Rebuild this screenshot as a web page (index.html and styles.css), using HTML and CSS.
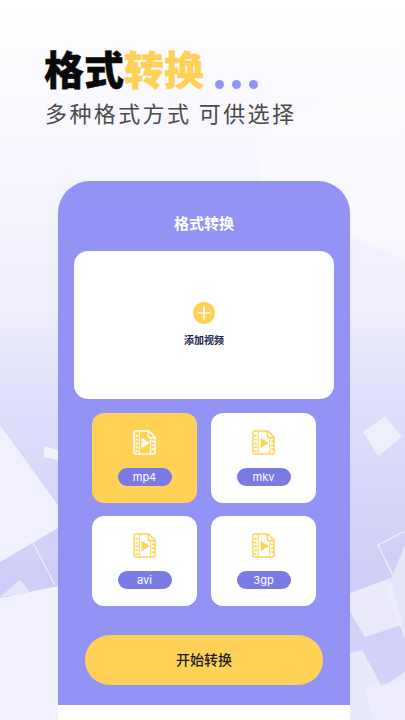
FILE: index.html
```html
<!DOCTYPE html>
<html lang="zh-CN">
<head>
<meta charset="utf-8">
<title>格式转换</title>
<link rel="stylesheet" href="styles.css">
</head>
<body>
<svg class="backdrop" viewBox="0 0 405 720" preserveAspectRatio="none" aria-hidden="true">
  <defs>
    <linearGradient id="bg" x1="0" y1="0" x2="0" y2="1">
      <stop offset="0" stop-color="#ffffff"/>
      <stop offset="0.16" stop-color="#f8f8fe"/>
      <stop offset="0.42" stop-color="#efeffd"/>
      <stop offset="0.56" stop-color="#dfdffb"/>
      <stop offset="0.8" stop-color="#cdcdf8"/>
      <stop offset="1" stop-color="#d4d4f9"/>
    </linearGradient>
  </defs>
  <rect width="405" height="720" fill="url(#bg)"/>
  <path d="M405 82 L330 100 Q260 125 255 145 Q258 175 270 200 L405 260Z" fill="#fff" opacity=".4"/>
  <path d="M0 425 L58 505 L58 528 L0 562Z" fill="#f0f0fe"/>
  <path d="M0 598 L58 586 L58 720 L0 720Z" fill="#f2f2fe"/>
  <path d="M0 597 L20 580 L30 592Z" fill="#e6e6fb"/>
  <path d="M44 446 L58 450 L58 460 L44 457Z" fill="#f2f2fe"/>
  <path d="M32 541 L55 585" stroke="#eeeefd" stroke-width="1.2" fill="none"/>
  <path d="M0 555 L32 538" stroke="#f6f6ff" stroke-width="1.5" fill="none"/>
  <path d="M385 416 L402 437 L378 456 L363 432Z" fill="#eeeefd"/>
  <path d="M405 531 L378 545 L405 600" stroke="#eaeafc" stroke-width="1.5" fill="none"/>
  <path d="M405 545 L386 590 L405 640Z" fill="#e6e6fb"/>
  <path d="M350 593 L390 578 L402 625 L365 637 L350 612Z" fill="#eeeefd" opacity=".85"/>
  <path d="M350 653 L362 650 L382 687 L405 672 L405 720 L350 720Z" fill="#e9e9fc"/>
  <path d="M365 688 L405 680 L405 720 L372 720Z" fill="#eeeefd" opacity=".8"/>
</svg>

<main class="page">
  <header class="hero">
    <div class="headline">
      <h1 class="title">格式<span class="accent">转换</span></h1>
      <div class="dots"><i></i><i></i><i></i></div>
    </div>
    <p class="subtitle">多种格式方式 可供选择</p>
  </header>

  <section class="phone">
    <div class="panel">
      <h2 class="panel-title">格式转换</h2>
      <div class="add-box">
        <span class="add-btn">
          <svg viewBox="0 0 22 22" width="22" height="22" aria-hidden="true"><path d="M11 4.500v13M4.500 11h13" stroke="#fff" stroke-width="1.6" fill="none"/></svg>
        </span>
        <span class="add-label">添加视频</span>
      </div>
      <div class="formats">
        <div class="tile tile-active">
          <svg class="file-icon" viewBox="0 0 24 26" aria-hidden="true"><use href="#film"/></svg>
          <span class="tag">mp4</span>
        </div>
        <div class="tile">
          <svg class="file-icon" viewBox="0 0 24 26" aria-hidden="true"><use href="#film"/></svg>
          <span class="tag">mkv</span>
        </div>
        <div class="tile">
          <svg class="file-icon" viewBox="0 0 24 26" aria-hidden="true"><use href="#film"/></svg>
          <span class="tag">avi</span>
        </div>
        <div class="tile">
          <svg class="file-icon" viewBox="0 0 24 26" aria-hidden="true"><use href="#film"/></svg>
          <span class="tag">3gp</span>
        </div>
      </div>
      <button class="start" type="button">开始转换</button>
    </div>
    <div class="phone-foot"></div>
  </section>
</main>

<svg class="defs" width="0" height="0" aria-hidden="true">
  <symbol id="film" viewBox="0 0 24 26">
    <path d="M3 1h13.500L23 7.500V23a2 2 0 0 1-2 2H3a2 2 0 0 1-2-2V3a2 2 0 0 1 2-2Z" fill="none" stroke="currentColor" stroke-width="1.500" stroke-linejoin="round"/>
    <path d="M16 1.200V6a2 2 0 0 0 2 2h4.800" fill="none" stroke="currentColor" stroke-width="1.500"/>
    <path d="M6.500 1v24M18.500 9v16" fill="none" stroke="currentColor" stroke-width="1"/>
    <path d="M9 8l8.500 5.500L9 19Z" fill="currentColor"/>
    <path d="M2.500 6h2.500M2.500 10h2.500M2.500 14h2.500M2.500 18h2.500M2.500 22h2.500M20 12h2.500M20 16h2.500M20 20h2.500" stroke="currentColor" stroke-width="2" fill="none"/>
  </symbol>
</svg>
</body>
</html>
```
FILE: styles.css
```css
* { box-sizing: border-box; }
html, body { margin: 0; height: 720px; overflow: hidden; }
body {
  position: relative;
  font-family: "Noto Sans CJK SC", "Noto Sans", sans-serif;
  background: #fff;
}
.backdrop { position: absolute; inset: 0; width: 405px; height: 720px; display: block; }
.defs { position: absolute; }
.page { position: relative; display: flex; flex-direction: column; height: 720px; }

.hero { padding: 43px 0 0 44px; height: 181px; flex: none; }
.headline { display: flex; align-items: flex-end; height: 50px; }
.title {
  margin: 0;
  font-size: 40px;
  line-height: 50px;
  font-weight: 900;
  color: #0a0a0a;
  -webkit-text-stroke: .4px currentColor;
}
.accent { color: #ffd257; }
.dots { display: flex; gap: 8px; margin: 0 0 4px 11px; flex: none; }
.dots i { width: 9px; height: 9px; border-radius: 50%; background: #9393f5; }
.subtitle {
  margin: 3px 0 0 1px;
  font-size: 22px;
  line-height: 32px;
  letter-spacing: 2.4px;
  color: #4a4a4a;
  white-space: nowrap;
}

.phone {
  flex: 1;
  margin: 0 55px 0 58px;
  display: flex;
  flex-direction: column;
  background: #fff;
  border-radius: 32px 32px 0 0;
}
.panel {
  height: 524px;
  flex: none;
  padding: 0 16px;
  display: flex;
  flex-direction: column;
  background: #9393f5;
  border-radius: 32px 32px 0 0;
}
.panel-title {
  margin: 31px 0 0;
  text-align: center;
  font-size: 15px;
  line-height: 22px;
  font-weight: 700;
  color: #fff;
}
.add-box {
  margin-top: 17px;
  height: 148px;
  display: flex;
  flex-direction: column;
  align-items: center;
  background: #fff;
  border-radius: 14px;
}
.add-btn {
  margin-top: 51px;
  width: 22px;
  height: 22px;
  border-radius: 50%;
  background: #ffd257;
}
.add-btn svg { display: block; }
.add-label {
  margin-top: 8px;
  font-size: 10px;
  line-height: 16px;
  font-weight: 700;
  color: #23234f;
}
.formats {
  margin: 14px 2px 0 18px;
  display: grid;
  grid-template-columns: 105px 105px;
  grid-auto-rows: 90px;
  column-gap: 14px;
  row-gap: 13px;
}
.tile {
  display: flex;
  flex-direction: column;
  align-items: center;
  background: #fff;
  border-radius: 12px;
  color: #ffd257;
}
.tile-active { background: #ffd257; color: #fff; }
.file-icon { width: 23px; height: 25px; margin-top: 17px; display: block; }
.tag {
  margin-top: 13px;
  width: 54px;
  height: 18px;
  border-radius: 9px;
  background: #7a7ae6;
  color: #fff;
  text-align: center;
  font-family: "Inter", "Liberation Sans", sans-serif;
  font-size: 11px;
  line-height: 18px;
}
.start {
  align-self: flex-start;
  margin: 29px 0 0 11px;
  width: 238px;
  height: 50px;
  border: 0;
  padding: 0 0 2px;
  border-radius: 25px;
  background: #ffd257;
  color: #1c1c1c;
  font-family: inherit;
  font-size: 14px;
  font-weight: 500;
}
.phone-foot { flex: 1; }
```
